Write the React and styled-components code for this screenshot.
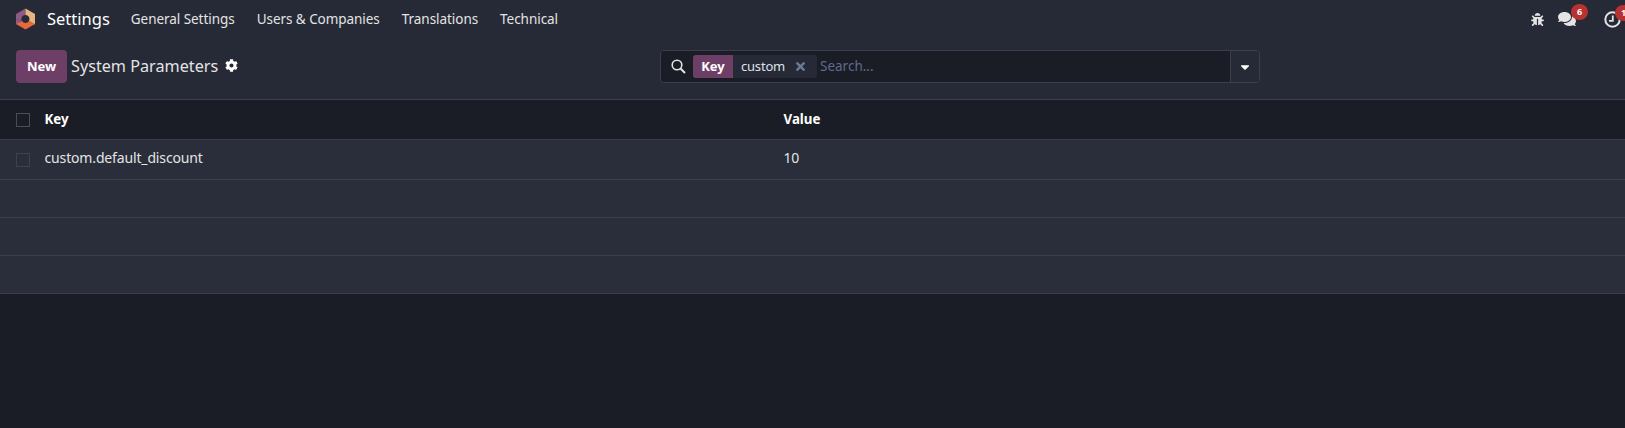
import React from 'react';
import styled, { createGlobalStyle } from 'styled-components';
import { FaBug, FaComments, FaCog, FaCaretDown, FaTimes } from 'react-icons/fa';

const GlobalStyle = createGlobalStyle`
  html, body {
    margin: 0;
    height: 100%;
    overflow: hidden;
    background: #1b1d26;
  }
  body {
    font-family: "Noto Sans", "Open Sans", sans-serif;
    font-size: 13px;
    color: #e4e4e4;
  }
`;

const Page = styled.div`
  width: 1625px;
  height: 428px;
  overflow: hidden;
  background: #1b1d26;
`;

const NavBar = styled.nav`
  height: 38px;
  display: flex;
  align-items: center;
  padding-left: 15px;
  background: #262a36;
  overflow: hidden;
`;

const Brand = styled.div`
  display: flex;
  align-items: center;
  gap: 11px;
  font-size: 16.5px;
  line-height: 36px;
  color: #fff;
  margin-right: 21px;
`;

const NavLinks = styled.div`
  display: flex;
  gap: 22px;
  font-size: 13.5px;
  line-height: 36px;
  letter-spacing: -0.05px;
  color: #e4e4e4;
`;

const Systray = styled.div`
  margin-left: auto;
  display: flex;
  align-items: center;
  color: #e4e4e4;
`;

const TrayItem = styled.div`
  position: relative;
  display: flex;
  margin-left: ${(p) => p.$gap}px;
  margin-right: ${(p) => p.$end || 0}px;
`;

const Badge = styled.span`
  position: absolute;
  top: -6px;
  left: ${(p) => p.$left}px;
  width: 17px;
  height: 16px;
  border-radius: 50%;
  background: #b83232;
  color: #fff;
  font-size: 9px;
  font-weight: 700;
  line-height: 16px;
  text-align: center;
`;

const ControlPanel = styled.div`
  height: 62px;
  box-sizing: border-box;
  display: flex;
  align-items: flex-start;
  padding: 12px 0 0 16px;
  background: #262a36;
  border-bottom: 1px solid #3c3e4b;
`;

const NewButton = styled.button`
  width: 51px;
  height: 33px;
  padding: 0 0 2px;
  border: 0;
  border-radius: 4px;
  background: #6e3f66;
  color: #fff;
  font-family: inherit;
  font-size: 13px;
  font-weight: 700;
`;

const Title = styled.div`
  display: flex;
  align-items: center;
  gap: 7px;
  height: 31px;
  width: 589px;
  margin-left: 4px;
  font-size: 16.2px;
  color: #e4e4e4;
  svg {
    color: #fff;
  }
`;

const SearchGroup = styled.div`
  display: flex;
  width: 600px;
  height: 33px;
  box-sizing: border-box;
  border: 1px solid #3c3e4b;
  border-radius: 4px;
  overflow: hidden;
`;

const SearchBox = styled.div`
  flex: 1;
  display: flex;
  align-items: center;
  padding-left: 10px;
  background: #1b1d26;
  border-right: 1px solid #3c3e4b;
`;

const Facet = styled.div`
  display: flex;
  height: 23px;
  margin-left: 7px;
  border-radius: 3px;
  overflow: hidden;
  background: #262a36;
  align-items: center;
  font-size: 13px;
  line-height: 21px;
`;

const FacetLabel = styled.span`
  width: 40px;
  height: 100%;
  display: flex;
  align-items: center;
  justify-content: center;
  background: #6e3f66;
  color: #fff;
  font-weight: 700;
`;

const FacetValue = styled.span`
  display: flex;
  align-items: center;
  gap: 9px;
  padding: 0 10px 0 8px;
  color: #dfe0e6;
  letter-spacing: -0.2px;
  svg {
    color: #6d7a96;
  }
`;

const SearchText = styled.span`
  margin-left: 3px;
  padding-bottom: 2px;
  color: #5c6b8e;
  font-size: 13.5px;
  line-height: 20px;
`;

const DropButton = styled.div`
  width: 28px;
  display: flex;
  align-items: center;
  justify-content: center;
  color: #fff;
  background: #262a36;
`;

const Row = styled.div`
  display: grid;
  grid-template-columns: 44.5px 739px 1fr;
  align-items: center;
  box-sizing: border-box;
  height: ${(p) => p.$height}px;
  border-bottom: 1px solid #3c3e4b;
  background: ${(p) => (p.$head ? '#1b1d26' : '#2a2e3a')};
  font-weight: ${(p) => (p.$head ? 700 : 400)};
  color: ${(p) => (p.$head ? '#fff' : '#e4e4e4')};
`;

const Check = styled.span`
  width: 12px;
  height: 12px;
  margin-left: 16px;
  border: 1px solid ${(p) => (p.$head ? '#4a4c59' : '#3f424e')};
  display: block;
`;

const Cell = styled.div`
  font-size: ${(p) => (p.$head ? 13.3 : 14)}px;
  letter-spacing: ${(p) => (p.$head ? 0 : '-0.15px')};
  line-height: 18px;
  padding-bottom: ${(p) => (p.$head ? 2 : 4)}px;
`;

function Logo() {
  return (
    <svg width="21" height="22" viewBox="0 0 21 22">
      <path d="M10.5 0.5 L1 6 V11 L6.8 13 A4 4 0 0 1 10.5 7 Z" fill="#8f5a86" />
      <path d="M1 11 V16.5 L6.8 13 Z" fill="#8f5a86" />
      <path d="M10.5 0.5 L20 6 V16.5 L14 13 A4 4 0 0 0 10.5 7 Z" fill="#e4b57f" />
      <path d="M1 16 L7 13 A4 4 0 0 0 14 13 L20 16 L10.5 21.5 Z" fill="#e8693a" />
    </svg>
  );
}

function ClockIcon() {
  return (
    <svg width="17" height="17" viewBox="0 0 17 17" fill="none" stroke="currentColor">
      <circle cx="8.5" cy="8.5" r="7.2" strokeWidth="2" />
      <path d="M8.8 4.5 V9.8 H5" strokeWidth="1.8" />
    </svg>
  );
}

function SearchIcon() {
  return (
    <svg width="15" height="15" viewBox="0 0 15 15" fill="none" stroke="#e4e4e4" strokeWidth="1.6">
      <circle cx="6" cy="6" r="4.8" />
      <path d="M9.5 9.5 L14 14" strokeWidth="2" />
    </svg>
  );
}

export default function App() {
  return (
    <Page>
      <GlobalStyle />
      <NavBar>
        <Brand>
          <Logo />
          Settings
        </Brand>
        <NavLinks>
          <span>General Settings</span>
          <span>Users &amp; Companies</span>
          <span>Translations</span>
          <span>Technical</span>
        </NavLinks>
        <Systray>
          <TrayItem $gap={0}>
            <FaBug size={13} />
          </TrayItem>
          <TrayItem $gap={14}>
            <FaComments size={18} />
            <Badge $left={13}>6</Badge>
          </TrayItem>
          <TrayItem $gap={28} $end={4}>
            <ClockIcon />
            <Badge $left={11}>1</Badge>
          </TrayItem>
        </Systray>
      </NavBar>
      <ControlPanel>
        <NewButton>New</NewButton>
        <Title>
          System Parameters
          <FaCog size={13} />
        </Title>
        <SearchGroup>
          <SearchBox>
            <SearchIcon />
            <Facet>
              <FacetLabel>Key</FacetLabel>
              <FacetValue>
                custom
                <FaTimes size={13} />
              </FacetValue>
            </Facet>
            <SearchText>Search...</SearchText>
          </SearchBox>
          <DropButton>
            <FaCaretDown size={14} />
          </DropButton>
        </SearchGroup>
      </ControlPanel>
      <Row $head $height={40}>
        <Check $head />
        <Cell $head>Key</Cell>
        <Cell $head>Value</Cell>
      </Row>
      <Row $height={40}>
        <Check />
        <Cell>custom.default_discount</Cell>
        <Cell>10</Cell>
      </Row>
      <Row $height={38} />
      <Row $height={38} />
      <Row $height={38} />
    </Page>
  );
}
